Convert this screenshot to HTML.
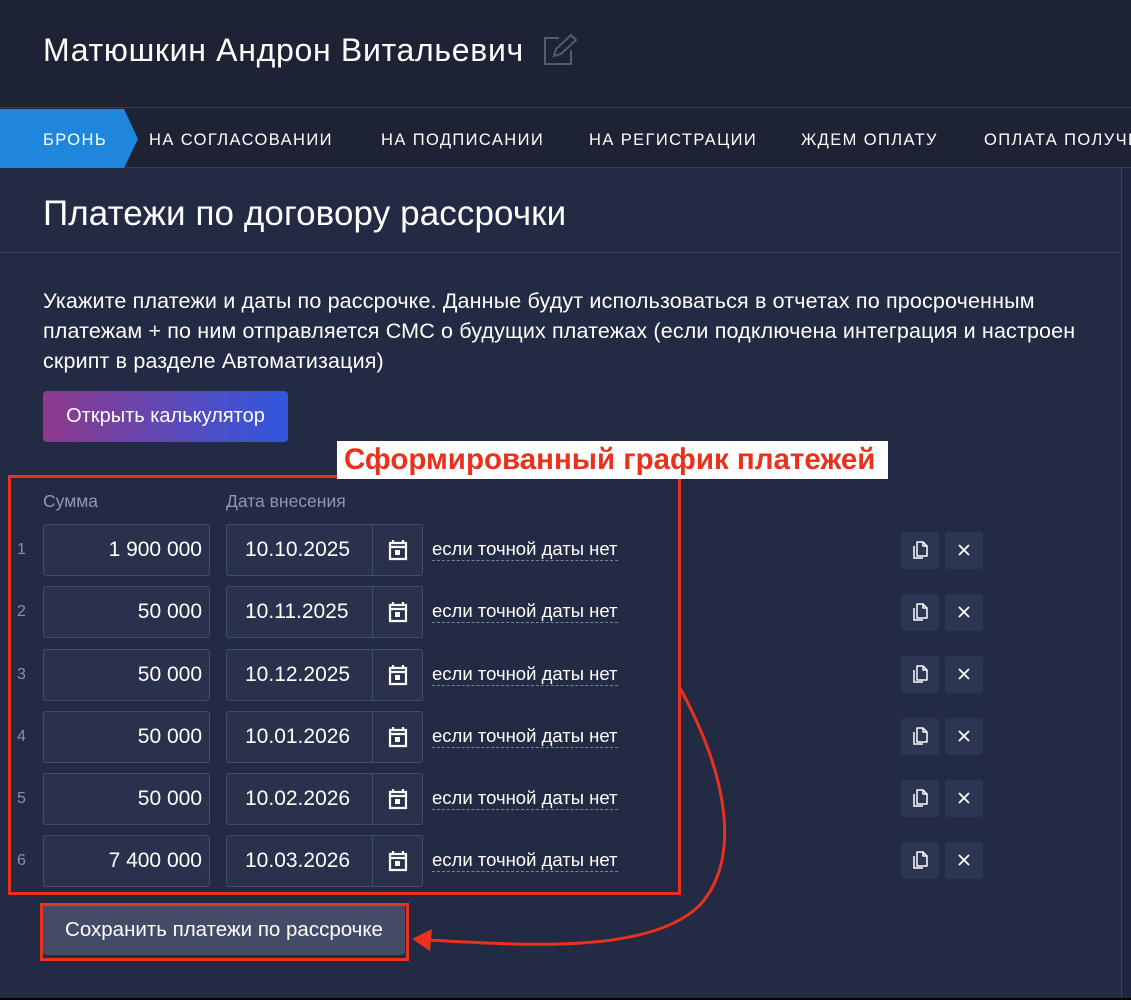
<!DOCTYPE html>
<html><head><meta charset="utf-8"><style>
*{box-sizing:border-box;margin:0;padding:0}
body{width:1131px;height:1000px;overflow:hidden;background:#1f2640;font-family:"Liberation Sans",sans-serif;color:#fff;position:relative}
.hdr{position:absolute;left:0;top:0;width:1131px;height:108px;background:#1d2235;border-bottom:1px solid #333b55}
.hdr h1{position:absolute;left:43px;top:32px;font-size:32px;font-weight:normal;letter-spacing:0.7px;white-space:nowrap}
.nav{position:absolute;left:0;top:109px;width:1131px;height:59px;background:#1d2235;border-bottom:1px solid #333b55}
.nav span{position:absolute;top:22px;font-size:16.5px;letter-spacing:1.4px;white-space:nowrap}
.panel{position:absolute;left:0;top:169px;width:1122px;height:829px;background:#222a44;border-right:1px solid #3a4462}
.title{position:absolute;left:43px;top:194px;font-size:35px;white-space:nowrap;letter-spacing:0.1px}
.sep{position:absolute;left:0;top:252px;width:1121px;height:1px;background:#39425e}
.desc{position:absolute;left:43px;top:286px;font-size:21.5px;line-height:30px;white-space:nowrap;letter-spacing:0.15px}
.calc{position:absolute;left:43px;top:391px;width:245px;height:51px;border-radius:4px;background:linear-gradient(90deg,#8e3a8c,#3157e0);font-size:20px;text-align:center;line-height:51px}
.lbl{position:absolute;top:491px;font-size:17.5px;color:#9098ad}
.num{position:absolute;left:17px;font-size:16px;color:#8a91a6}
.inp{position:absolute;height:52px;background:#29314d;border:1px solid #434c69;border-radius:3px;font-size:21px;line-height:50px}
.sum{left:43px;width:167px;text-align:right;padding-right:7px}
.date{left:226px;width:197px;padding-left:18px}
.date .dv{position:absolute;left:145px;top:0;width:1px;height:50px;background:#434c69}
.date svg{position:absolute;left:160px;top:14px}
.ex{position:absolute;left:432px;font-size:18.5px;border-bottom:1px dashed #7a8299;line-height:22px;white-space:nowrap}
.btn{position:absolute;width:38px;height:37px;background:#2c3551;border-radius:3px}
.btn svg{position:absolute;left:9px;top:8px}
.save{position:absolute;left:43px;top:905px;width:362px;height:50px;background:#434b66;border-radius:3px;font-size:20.5px;text-align:center;line-height:50px;white-space:nowrap}
.red{position:absolute;border:3px solid #e8321c}
.tag{position:absolute;left:337px;top:441px;width:551px;height:38px;background:#fff;color:#e8321c;font-weight:bold;font-size:29.5px;line-height:38px;padding-left:7px;white-space:nowrap}
.bot{position:absolute;left:0;top:998px;width:1131px;height:2px;background:#000}
</style></head><body>
<div class="hdr"><h1>Матюшкин Андрон Витальевич</h1>
<svg style="position:absolute;left:542px;top:34px" width="36" height="32" viewBox="0 0 36 32"><path d="M17 4H3v26h26V16" fill="none" stroke="#555c70" stroke-width="2"/><path d="M12 22l2-7L29 1l5 5-15 14z" fill="none" stroke="#555c70" stroke-width="2"/></svg></div>
<div class="nav">
<svg style="position:absolute;left:0;top:0" width="140" height="59"><polygon points="0,0 124,0 138,30 124,59 0,59" fill="#1f86de"/></svg>
<span style="left:43px">БРОНЬ</span><span style="left:149px">НА СОГЛАСОВАНИИ</span><span style="left:381px">НА ПОДПИСАНИИ</span><span style="left:589px">НА РЕГИСТРАЦИИ</span><span style="left:801px">ЖДЕМ ОПЛАТУ</span><span style="left:984px">ОПЛАТА ПОЛУЧЕНА</span></div>
<div class="panel"></div>
<div class="title">Платежи по договору рассрочки</div>
<div class="sep"></div>
<div class="desc">Укажите платежи и даты по рассрочке. Данные будут использоваться в отчетах по просроченным<br>платежам + по ним отправляется СМС о будущих платежах (если подключена интеграция и настроен<br>скрипт в разделе Автоматизация)</div>
<div class="calc">Открыть калькулятор</div>
<div class="lbl" style="left:43px">Сумма</div><div class="lbl" style="left:226px">Дата внесения</div>

<div class="num" style="top:541px">1</div><div class="inp sum" style="top:524px">1 900 000</div>
<div class="inp date" style="top:524px">10.10.2025<div class="dv"></div><svg width="22" height="22" viewBox="0 0 22 22"><path d="M6 1v4M16 1v4M3 4h16v16H3zM3 8h16" fill="none" stroke="#fff" stroke-width="2.2"/><rect x="8" y="11" width="5" height="5" fill="#fff"/></svg></div>
<div class="ex" style="top:538px">если точной даты нет</div>
<div class="btn" style="left:901px;top:532px"><svg width="20" height="20" viewBox="0 0 20 20"><path d="M4 6v12h9" fill="none" stroke="#fff" stroke-width="1.5"/><path d="M7 2h6l4 4v10H7zM13 2v4h4" fill="none" stroke="#fff" stroke-width="1.5" stroke-linejoin="round"/></svg></div>
<div class="btn" style="left:945px;top:532px"><svg width="20" height="20" viewBox="0 0 20 20"><path d="M5 5l10 10M15 5L5 15" stroke="#fff" stroke-width="1.8"/></svg></div>

<div class="num" style="top:603px">2</div><div class="inp sum" style="top:586px">50 000</div>
<div class="inp date" style="top:586px">10.11.2025<div class="dv"></div><svg width="22" height="22" viewBox="0 0 22 22"><path d="M6 1v4M16 1v4M3 4h16v16H3zM3 8h16" fill="none" stroke="#fff" stroke-width="2.2"/><rect x="8" y="11" width="5" height="5" fill="#fff"/></svg></div>
<div class="ex" style="top:600px">если точной даты нет</div>
<div class="btn" style="left:901px;top:594px"><svg width="20" height="20" viewBox="0 0 20 20"><path d="M4 6v12h9" fill="none" stroke="#fff" stroke-width="1.5"/><path d="M7 2h6l4 4v10H7zM13 2v4h4" fill="none" stroke="#fff" stroke-width="1.5" stroke-linejoin="round"/></svg></div>
<div class="btn" style="left:945px;top:594px"><svg width="20" height="20" viewBox="0 0 20 20"><path d="M5 5l10 10M15 5L5 15" stroke="#fff" stroke-width="1.8"/></svg></div>

<div class="num" style="top:666px">3</div><div class="inp sum" style="top:649px">50 000</div>
<div class="inp date" style="top:649px">10.12.2025<div class="dv"></div><svg width="22" height="22" viewBox="0 0 22 22"><path d="M6 1v4M16 1v4M3 4h16v16H3zM3 8h16" fill="none" stroke="#fff" stroke-width="2.2"/><rect x="8" y="11" width="5" height="5" fill="#fff"/></svg></div>
<div class="ex" style="top:663px">если точной даты нет</div>
<div class="btn" style="left:901px;top:656px"><svg width="20" height="20" viewBox="0 0 20 20"><path d="M4 6v12h9" fill="none" stroke="#fff" stroke-width="1.5"/><path d="M7 2h6l4 4v10H7zM13 2v4h4" fill="none" stroke="#fff" stroke-width="1.5" stroke-linejoin="round"/></svg></div>
<div class="btn" style="left:945px;top:656px"><svg width="20" height="20" viewBox="0 0 20 20"><path d="M5 5l10 10M15 5L5 15" stroke="#fff" stroke-width="1.8"/></svg></div>

<div class="num" style="top:728px">4</div><div class="inp sum" style="top:711px">50 000</div>
<div class="inp date" style="top:711px">10.01.2026<div class="dv"></div><svg width="22" height="22" viewBox="0 0 22 22"><path d="M6 1v4M16 1v4M3 4h16v16H3zM3 8h16" fill="none" stroke="#fff" stroke-width="2.2"/><rect x="8" y="11" width="5" height="5" fill="#fff"/></svg></div>
<div class="ex" style="top:725px">если точной даты нет</div>
<div class="btn" style="left:901px;top:718px"><svg width="20" height="20" viewBox="0 0 20 20"><path d="M4 6v12h9" fill="none" stroke="#fff" stroke-width="1.5"/><path d="M7 2h6l4 4v10H7zM13 2v4h4" fill="none" stroke="#fff" stroke-width="1.5" stroke-linejoin="round"/></svg></div>
<div class="btn" style="left:945px;top:718px"><svg width="20" height="20" viewBox="0 0 20 20"><path d="M5 5l10 10M15 5L5 15" stroke="#fff" stroke-width="1.8"/></svg></div>

<div class="num" style="top:790px">5</div><div class="inp sum" style="top:773px">50 000</div>
<div class="inp date" style="top:773px">10.02.2026<div class="dv"></div><svg width="22" height="22" viewBox="0 0 22 22"><path d="M6 1v4M16 1v4M3 4h16v16H3zM3 8h16" fill="none" stroke="#fff" stroke-width="2.2"/><rect x="8" y="11" width="5" height="5" fill="#fff"/></svg></div>
<div class="ex" style="top:787px">если точной даты нет</div>
<div class="btn" style="left:901px;top:780px"><svg width="20" height="20" viewBox="0 0 20 20"><path d="M4 6v12h9" fill="none" stroke="#fff" stroke-width="1.5"/><path d="M7 2h6l4 4v10H7zM13 2v4h4" fill="none" stroke="#fff" stroke-width="1.5" stroke-linejoin="round"/></svg></div>
<div class="btn" style="left:945px;top:780px"><svg width="20" height="20" viewBox="0 0 20 20"><path d="M5 5l10 10M15 5L5 15" stroke="#fff" stroke-width="1.8"/></svg></div>

<div class="num" style="top:852px">6</div><div class="inp sum" style="top:835px">7 400 000</div>
<div class="inp date" style="top:835px">10.03.2026<div class="dv"></div><svg width="22" height="22" viewBox="0 0 22 22"><path d="M6 1v4M16 1v4M3 4h16v16H3zM3 8h16" fill="none" stroke="#fff" stroke-width="2.2"/><rect x="8" y="11" width="5" height="5" fill="#fff"/></svg></div>
<div class="ex" style="top:849px">если точной даты нет</div>
<div class="btn" style="left:901px;top:842px"><svg width="20" height="20" viewBox="0 0 20 20"><path d="M4 6v12h9" fill="none" stroke="#fff" stroke-width="1.5"/><path d="M7 2h6l4 4v10H7zM13 2v4h4" fill="none" stroke="#fff" stroke-width="1.5" stroke-linejoin="round"/></svg></div>
<div class="btn" style="left:945px;top:842px"><svg width="20" height="20" viewBox="0 0 20 20"><path d="M5 5l10 10M15 5L5 15" stroke="#fff" stroke-width="1.8"/></svg></div>

<div class="save">Сохранить платежи по рассрочке</div>
<div class="red" style="left:8px;top:475px;width:673px;height:420px"></div>
<div class="red" style="left:40px;top:903px;width:369px;height:58px"></div>
<div class="tag">Сформированный график платежей</div>
<svg style="position:absolute;left:0;top:0" width="1131" height="1000"><path d="M680 688 C 730 780, 740 860, 700 905 C 650 955, 520 945, 428 940" fill="none" stroke="#e8321c" stroke-width="3"/><polygon points="412,939 432,929 430,951" fill="#e8321c"/></svg>
<div class="bot"></div>
</body></html>
